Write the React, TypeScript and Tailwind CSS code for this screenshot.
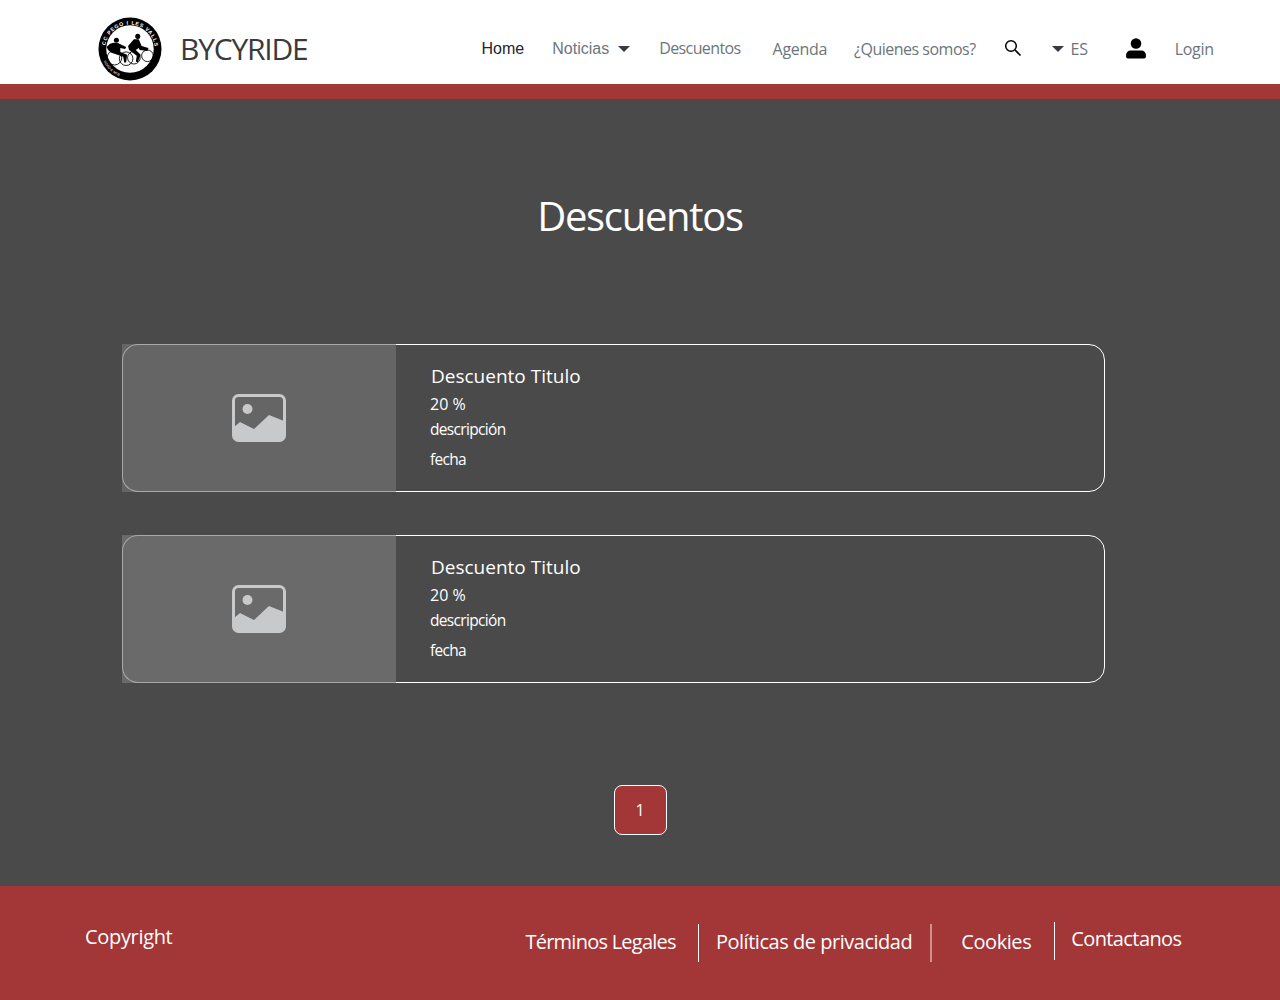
import React from "react";

const seg = "font-['Open_Sans','Noto_Sans',sans-serif]";

function Logo() {
  return (
    <svg width="64" height="64" viewBox="0 0 66 66" className="shrink-0">
      <defs>
        <path id="logoArc" d="M 7.5 29.4 A 25.7 25.7 0 1 1 57.2 41.8" />
        <path id="logoArcB" d="M 5.8 45.7 A 30 30 0 0 0 33 63" />
      </defs>
      <circle cx="33" cy="33" r="32.5" fill="#000" />
      <circle cx="33" cy="33" r="24.5" fill="#fff" />
      <text fill="#fff" fontSize="5.4" fontWeight="700" fontFamily="Liberation Sans, sans-serif" letterSpacing="0.8">
        <textPath href="#logoArc">CC PEGO I LES VALLS</textPath>
      </text>
      <text fill="#fff" fontSize="3.6" fontFamily="Liberation Sans, sans-serif">
        <textPath href="#logoArcB">ROAD &amp; MTB</textPath>
      </text>
      <g fill="none" stroke="#000" strokeWidth="0.9">
        <circle cx="17" cy="42" r="7.5" />
        <circle cx="29" cy="43" r="7" />
        <circle cx="37" cy="42" r="6.5" />
        <circle cx="51" cy="40" r="6" />
      </g>
      <g fill="#000">
        <circle cx="19" cy="24" r="2.6" />
        <path d="M9 31 Q13 25 21 27 L29 31 L28 33 L23 32 L23 36 L30 39 L29 47 L27 47 L26 41 L17 38 Q10 36 9 31 Z" />
        <circle cx="41" cy="20" r="2.6" />
        <path d="M31 30 L37 23 L42 23 L45 30 L52 32 L51 35 L43 34 L42 32 L39 34 L44 39 L41 47 L39 46 L40 40 L32 34 Z" />
      </g>
    </svg>
  );
}

function Caret({ className }: { className: string }) {
  return (
    <svg width="12" height="6" viewBox="0 0 12 6" className={className}>
      <path d="M0 0 L12 0 L6 6 Z" fill="#343a40" />
    </svg>
  );
}

function Card({ panel }: { panel: string }) {
  return (
    <div className="relative h-[148px] w-[983px] rounded-[16px] border border-white flex">
      <div className={`absolute -left-px -top-px h-[148px] w-[274px] flex items-center justify-center ${panel}`}>
        <div className="absolute inset-0 rounded-l-[16px] border-y border-l border-[#a8a8a8]" />
        <svg width="54" height="48" viewBox="0 0 54 48">
          <rect x="1.5" y="1.5" width="51" height="45" rx="5" fill="none" stroke="#c8c9cb" strokeWidth="3" />
          <circle cx="15.5" cy="15" r="5" fill="#c8c9cb" />
          <path d="M2 33 L8 28 L22 35 L37 21 L52 27 L52 41 Q52 46 47 46 L7 46 Q2 46 2 41 Z" fill="#c8c9cb" />
        </svg>
      </div>
      <div className={`ml-[307px] pt-[16px] text-white ${seg}`}>
        <div className="ml-px text-[19px] leading-[30px] tracking-[0px]">Descuento Titulo</div>
        <div className="mt-[1px] text-[16px] leading-[24px]">20 %</div>
        <div className="text-[15.5px] leading-[26px] tracking-[-0.67px]">descripción</div>
        <div className="mt-[4px] text-[15.5px] leading-[26px] tracking-[-0.7px]">fecha</div>
      </div>
    </div>
  );
}

export default function App() {
  return (
    <div className={`w-[1280px] h-[1000px] flex flex-col overflow-hidden ${seg}`}>
      <header className="h-[84px] bg-white flex items-center shrink-0 pl-[98px] pt-[14px]">
        <Logo />
        <div className="ml-[18px] text-[30px] leading-none text-[#3a3a3a] tracking-[-1.2px]">BYCYRIDE</div>
        <nav className="flex items-center ml-[174px] text-[#6c757d] text-[16px] tracking-[-0.3px]">
          <span className="font-['Liberation_Sans',sans-serif] text-[#212529] tracking-normal">Home</span>
          <span className="ml-[28px] font-['Liberation_Sans',sans-serif] tracking-normal">Noticias</span>
          <Caret className="ml-[9px]" />
          <span className="ml-[29px] -mt-[2px] tracking-[-0.6px]">Descuentos</span>
          <span className="ml-[32px]">Agenda</span>
          <span className="ml-[27px] tracking-[-0.5px]">¿Quienes somos?</span>
          <svg width="18" height="18" viewBox="0 0 18 18" className="ml-[28px] -mt-[2px]">
            <circle cx="7" cy="7" r="5.3" fill="none" stroke="#000" strokeWidth="1.5" />
            <path d="M11 11 L16.5 16.5" stroke="#000" strokeWidth="1.7" />
          </svg>
          <Caret className="ml-[30px]" />
          <span className="ml-[7px]">ES</span>
          <svg width="20" height="21" viewBox="0 0 20 21" className="ml-[38px] -mt-[2px]">
            <circle cx="10" cy="5.5" r="5.3" fill="#000" />
            <path d="M0 18 Q0 12.5 5 12.5 L15 12.5 Q20 12.5 20 18 Q20 20.5 18 20.5 L2 20.5 Q0 20.5 0 18 Z" fill="#000" />
          </svg>
          <span className="ml-[29px]">Login</span>
        </nav>
      </header>
      <div className="h-[15px] bg-[#a33636] shrink-0" />
      <main className="h-[787px] bg-[#4a4a4a] shrink-0 flex flex-col">
        <h1 className="mt-[90px] text-center text-white text-[40px] leading-[54px] tracking-[-1.3px] font-normal">Descuentos</h1>
        <div className="mt-[101px] ml-[122px] flex flex-col gap-[43px]">
          <Card panel="bg-[#656565]" />
          <Card panel="bg-[#6a6a6a]" />
        </div>
        <div className="mt-[102px] flex justify-center">
          <div className="w-[53px] h-[50px] rounded-[8px] border border-white bg-[#a33636] text-white text-[16px] flex items-center justify-center">1</div>
        </div>
      </main>
      <footer className="flex-1 bg-[#a33636] text-white text-[20px] relative flex items-start pl-[85px]">
        <span className="mt-[36px] leading-[30px] tracking-[-0.33px]">Copyright</span>
        <div className="ml-[353px] flex items-start">
          <span className="mt-[41px] leading-[30px] tracking-[-0.75px]">Términos Legales</span>
          <span className="ml-[22px] mt-[38px] w-px h-[38px] bg-white" />
          <span className="ml-[17px] mt-[41px] leading-[30px] tracking-[-0.47px]">Políticas de privacidad</span>
          <span className="ml-[18px] mt-[38px] w-[2px] h-[38px] bg-[#d58f8f]" />
          <span className="ml-[29px] mt-[41px] leading-[30px] tracking-[-0.43px]">Cookies</span>
          <span className="ml-[23px] mt-[36px] w-px h-[38px] bg-white" />
          <span className="ml-[16px] mt-[38px] leading-[30px] tracking-[-0.6px]">Contactanos</span>
        </div>
      </footer>
    </div>
  );
}
